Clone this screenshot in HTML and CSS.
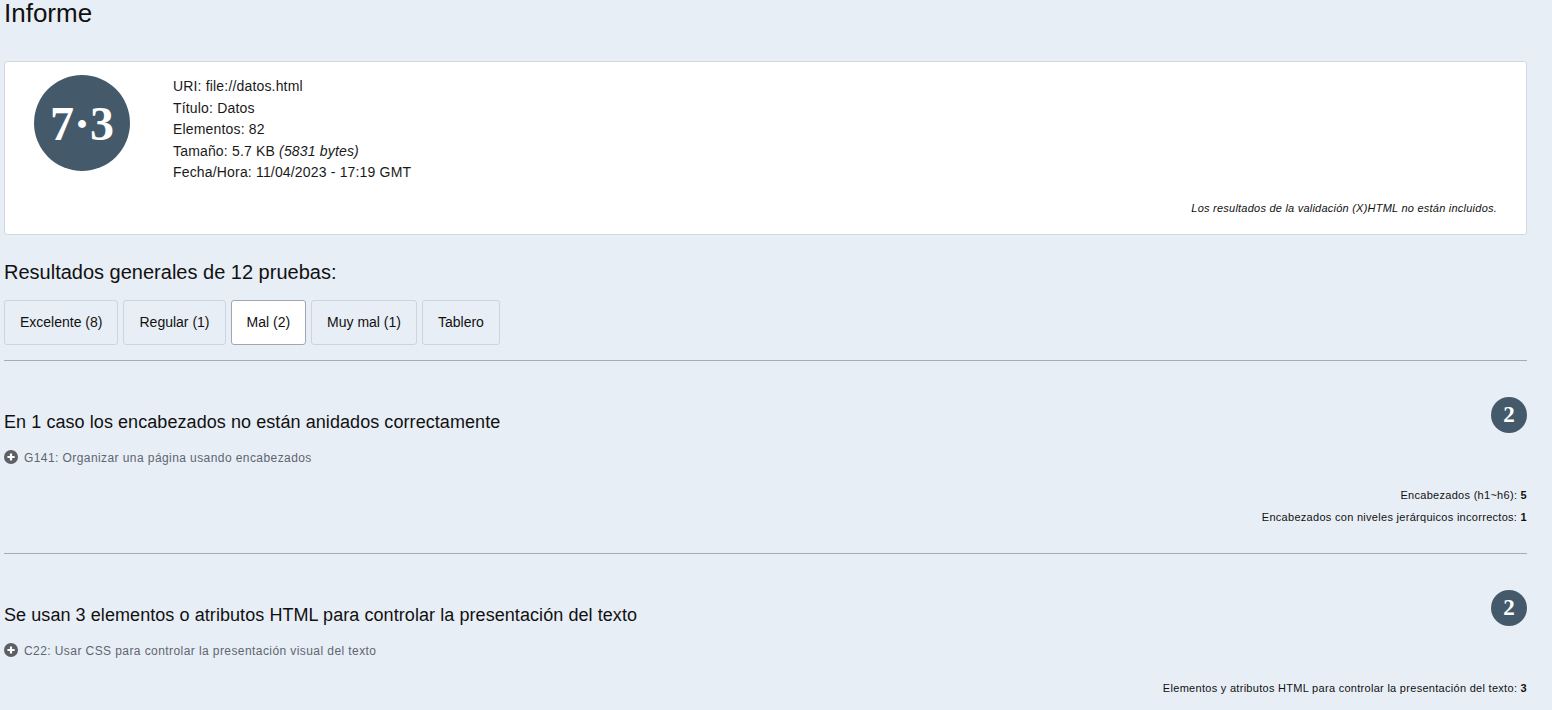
FILE: index.html
```html
<!DOCTYPE html>
<html lang="es">
<head>
<meta charset="utf-8">
<title>Informe</title>
<link rel="stylesheet" href="styles.css">
</head>
<body>
<main class="page">
  <h1 class="title">Informe</h1>

  <section class="summary">
    <div class="summary-top">
      <div class="score">7·3</div>
      <ul class="info">
        <li>URI: file://datos.html</li>
        <li>Título: Datos</li>
        <li>Elementos: 82</li>
        <li>Tamaño: 5.7 KB <em>(5831 bytes)</em></li>
        <li>Fecha/Hora: 11/04/2023 - 17:19 GMT</li>
      </ul>
    </div>
    <p class="note">Los resultados de la validación (X)HTML no están incluidos.</p>
  </section>

  <h2 class="results-title">Resultados generales de 12 pruebas:</h2>

  <nav class="tabs">
    <button class="tab">Excelente (8)</button>
    <button class="tab">Regular (1)</button>
    <button class="tab tab-active">Mal (2)</button>
    <button class="tab">Muy mal (1)</button>
    <button class="tab">Tablero</button>
  </nav>

  <article class="test">
    <div class="test-head">
      <h3 class="test-title">En 1 caso los encabezados no están anidados correctamente</h3>
      <span class="badge">2</span>
    </div>
    <div class="test-link">
      <svg class="plus" viewBox="0 0 14 14" width="14" height="14"><circle cx="7" cy="7" r="7" fill="#5c5f63"/><path d="M7 3.4v7.2M3.4 7h7.2" stroke="#fff" stroke-width="2.2"/></svg>
      <span>G141: Organizar una página usando encabezados</span>
    </div>
    <ul class="stats">
      <li>Encabezados (h1~h6): <b>5</b></li>
      <li>Encabezados con niveles jerárquicos incorrectos: <b>1</b></li>
    </ul>
  </article>

  <article class="test">
    <div class="test-head">
      <h3 class="test-title">Se usan 3 elementos o atributos HTML para controlar la presentación del texto</h3>
      <span class="badge">2</span>
    </div>
    <div class="test-link">
      <svg class="plus" viewBox="0 0 14 14" width="14" height="14"><circle cx="7" cy="7" r="7" fill="#5c5f63"/><path d="M7 3.4v7.2M3.4 7h7.2" stroke="#fff" stroke-width="2.2"/></svg>
      <span>C22: Usar CSS para controlar la presentación visual del texto</span>
    </div>
    <ul class="stats">
      <li>Elementos y atributos HTML para controlar la presentación del texto: <b>3</b></li>
    </ul>
  </article>
</main>
</body>
</html>
```

FILE: styles.css
```css
* { box-sizing: border-box; }

html, body {
  margin: 0;
  padding: 0;
  background: #e8eef6;
}

body {
  font-family: "Liberation Sans", Arial, sans-serif;
  color: #111;
  overflow: hidden;
}

.page {
  width: 1527px;
  padding-left: 4px;
}

.title {
  margin: 0;
  font-size: 26px;
  font-weight: normal;
  line-height: 26px;
}

.summary {
  margin-top: 35px;
  background: #fff;
  border: 1px solid #d3d9e2;
  border-radius: 3px;
  padding: 13px 29px 19px 29px;
}

.summary-top {
  display: flex;
  align-items: flex-start;
  gap: 43px;
}

.score {
  width: 96px;
  height: 96px;
  border-radius: 50%;
  background: #445a6a;
  color: #fff;
  font-family: "Liberation Serif", "Times New Roman", serif;
  font-weight: bold;
  font-size: 48px;
  display: flex;
  align-items: center;
  justify-content: center;
  flex: none;
}

.info {
  list-style: none;
  margin: 1px 0 0;
  padding: 0;
  font-size: 14px;
  line-height: 21.5px;
  letter-spacing: 0.17px;
  color: #1a1a1a;
}

.note {
  margin: 17px 0 0;
  text-align: right;
  font-size: 11px;
  line-height: 14px;
  letter-spacing: 0.23px;
  font-style: italic;
  color: #111;
}

.results-title {
  margin: 25px 0 0;
  font-size: 20px;
  font-weight: normal;
  line-height: 24px;
}

.tabs {
  margin-top: 16px;
  display: flex;
  gap: 5px;
  padding-bottom: 15px;
  border-bottom: 1px solid #a4abc0;
}

.tab {
  height: 45px;
  padding: 0 15px;
  font-family: "Liberation Sans", Arial, sans-serif;
  font-size: 14px;
  color: #111;
  background: #e8eef6;
  border: 1px solid #cdd4df;
  border-radius: 3px;
}

.tab-active {
  background: #fff;
  border-color: #9ea6b8;
}

.test {
  padding-top: 36px;
  padding-bottom: 25px;
  border-bottom: 1px solid #a4abc0;
}

.test-head {
  display: flex;
  justify-content: space-between;
  align-items: flex-start;
}

.test-title {
  margin: 14px 0 0;
  font-size: 18px;
  font-weight: normal;
  line-height: 22px;
  letter-spacing: 0.07px;
}

.badge {
  width: 36px;
  height: 36px;
  border-radius: 50%;
  background: #445a6a;
  color: #fff;
  font-family: "Liberation Serif", "Times New Roman", serif;
  font-weight: bold;
  font-size: 23px;
  display: flex;
  align-items: center;
  justify-content: center;
  flex: none;
}

.test-link {
  margin-top: 17px;
  display: flex;
  align-items: center;
  gap: 6px;
  font-size: 12px;
  line-height: 16px;
  letter-spacing: 0.42px;
  color: #5d6670;
}

.plus {
  flex: none;
  margin-top: -2px;
}

.stats {
  list-style: none;
  margin: 18px 0 0;
  padding: 0;
  text-align: right;
  font-size: 11px;
  line-height: 22px;
  letter-spacing: 0.29px;
  color: #111;
}
```
